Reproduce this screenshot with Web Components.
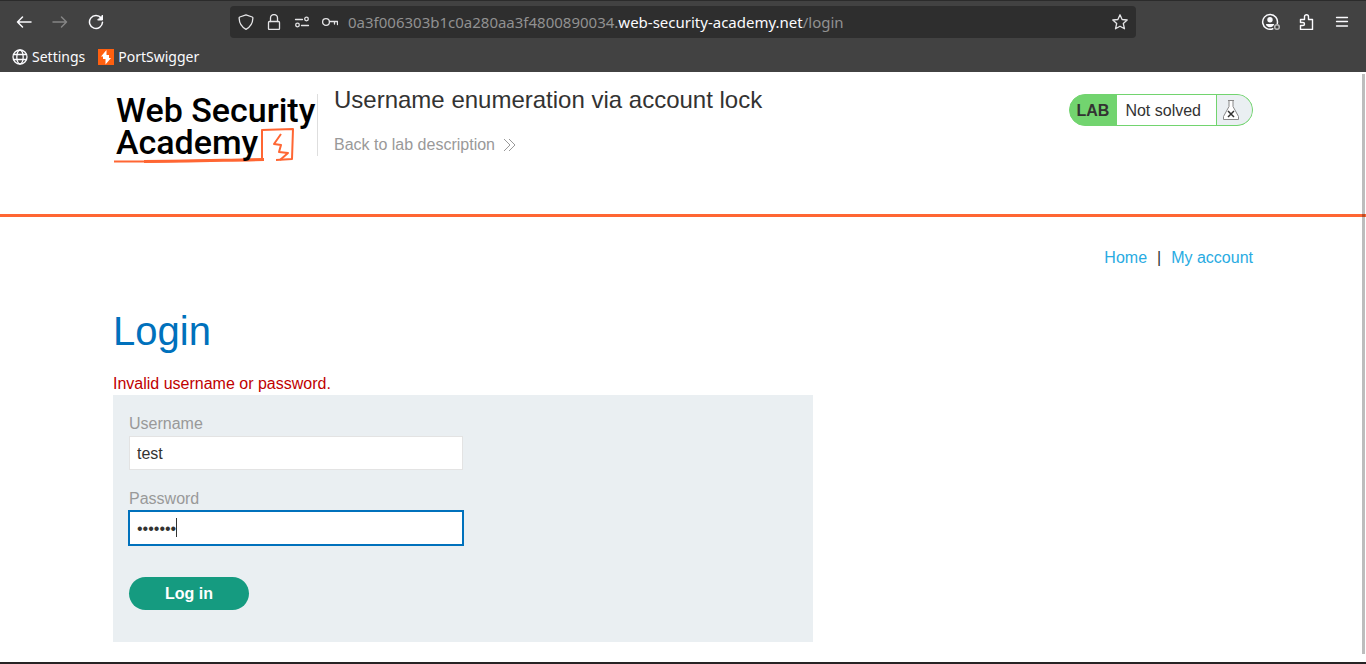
<!DOCTYPE html>
<html lang="en">
<head>
<meta charset="utf-8">
<title>Username enumeration via account lock</title>
<style>
body { margin: 0; background: #fff; color: #333332; font: 16px/22px "Liberation Sans", Arial, sans-serif; }
</style>
</head>
<body>
<app-window>
  <browser-bar slot="bar"></browser-bar>
  <lab-header>
    <span slot="title">Username enumeration via account lock</span>
    <lab-status slot="status">Not solved</lab-status>
  </lab-header>
  <account-nav></account-nav>
  <login-form>Invalid username or password.</login-form>
</app-window>

<script>
const define = (name, markup) => {
  const template = document.createElement('template');
  template.innerHTML = markup;
  customElements.define(name, class extends HTMLElement {
    constructor() {
      super();
      this.attachShadow({ mode: 'open' }).append(template.content.cloneNode(true));
    }
  });
};

define('app-window', `
<style>
  :host { display: flex; flex-direction: column; min-height: 100vh; box-sizing: border-box; border-bottom: 2px solid #262324; position: relative; }
  main { flex: 1; }
  .thumb { position: absolute; top: 74px; right: 1px; bottom: 8px; width: 3px; background: rgba(0,0,0,.26); }
</style>
<slot name="bar"></slot>
<main><slot></slot></main>
<div class="thumb"></div>`);

define('browser-bar', `
<style>
  :host { display: block; background: #424242; border-top: 1px solid #2b2b2b; color: #fbfbfe; font: 14px/20px "Noto Sans", sans-serif; }
  svg { display: block; width: 16px; height: 16px; fill: none; stroke: currentColor; stroke-width: 1.3; stroke-linecap: round; stroke-linejoin: round; }
  .tools { display: flex; align-items: center; padding: 5px 0; }
  .side { flex: 0 0 230px; box-sizing: border-box; display: flex; gap: 20px; padding: 0 16px; }
  .right { justify-content: flex-end; }
  button { all: unset; display: block; }
  button:disabled { color: #858585; }
  .url { flex: 1; min-width: 0; height: 32px; box-sizing: border-box; padding: 0 8px; display: flex; align-items: center; gap: 12px; background: #2e2e2e; border-radius: 4px; }
  .url svg { color: #e4e4e6; }
  .address { flex: 1; margin-left: -2px; font-size: 15px; color: #919191; white-space: nowrap; overflow: hidden; }
  b { font-weight: 400; color: #fbfbfe; }
  .bookmarks { display: flex; gap: 13px; padding: 4px 12px 5px; }
  a { display: flex; align-items: center; gap: 4px; color: inherit; text-decoration: none; }
</style>
<div class="tools">
  <div class="side">
    <button aria-label="Back"><svg viewBox="0 0 16 16"><path d="M15 8H1.500M6.500 3l-5 5 5 5" stroke-width="1.5"/></svg></button>
    <button aria-label="Forward" disabled><svg viewBox="0 0 16 16"><path d="M1 8h13.500M9.500 3l5 5-5 5" stroke-width="1.5"/></svg></button>
    <button aria-label="Reload"><svg viewBox="0 0 16 16"><path d="M13.200 4.100A6.500 6.500 0 1 0 14.500 8.300" stroke-width="1.5"/><path d="M14.500 1.500v4.500H10z" fill="currentColor" stroke-width="1"/></svg></button>
  </div>
  <div class="url">
    <svg viewBox="0 0 16 16"><path d="M8 .8 14.200 3c.5.200.7.500.7 1C14.700 9 12.500 13 8 15.300 3.500 13 1.300 9 1.100 4c0-.5.200-.8.700-1z"/></svg>
    <svg viewBox="0 0 16 16"><rect x="2.500" y="7.500" width="11" height="8" rx="1"/><path d="M4.500 7.500V4a3.500 3.500 0 0 1 7 0v3.500"/></svg>
    <svg viewBox="0 0 16 16"><path d="M1.500 5.500h7M7.500 11.500h7"/><circle cx="12.500" cy="5" r="1.800"/><circle cx="3.500" cy="11" r="1.800"/></svg>
    <svg viewBox="0 0 16 16"><circle cx="4" cy="8" r="3.400"/><path d="M7.500 7.500h8v3M12.500 7.500v2.500"/></svg>
    <div class="address" role="textbox" aria-label="Address" tabindex="0">0a3f006303b1c0a280aa3f4800890034.<b>web-security-academy.net</b>/login</div>
    <button aria-label="Bookmark this page"><svg viewBox="0 0 16 16"><path d="m8 .8 2.100 4.700 5.100.5-3.900 3.500 1.200 5.300L8 12.200l-4.500 2.600 1.200-5.300L.8 6l5.100-.5z"/></svg></button>
  </div>
  <div class="side right">
    <button aria-label="Account"><svg viewBox="0 0 16 16" overflow="visible"><path d="M10.800 14.800A7.400 7.400 0 1 1 15.300 9.500" stroke-width="1.500"/><circle cx="8" cy="5.700" r="2.700" fill="currentColor" stroke="none"/><path d="M3.800 10h8.400c-.5 2-2 3.200-4.200 3.200S4.300 12 3.800 10z" fill="currentColor" stroke="none"/><circle cx="15" cy="13" r="2.300" stroke="#b8b8b8" stroke-width="1.500"/></svg></button>
    <button aria-label="Extensions"><svg viewBox="0 0 16 16"><path d="M2.500 5.500h4V2.700a2 2 0 0 1 4 0v2.800h4v10h-12v-4H5a1.500 1.500 0 0 0 0-3H2.500z" stroke-width="1.400"/></svg></button>
    <button aria-label="Menu"><svg viewBox="0 0 16 16"><path d="M2.500 3.500h11M2.500 7.500h11M2.500 12h11"/></svg></button>
  </div>
</div>
<nav class="bookmarks" aria-label="Bookmarks">
  <a href="#settings"><svg viewBox="0 0 16 16"><circle cx="8" cy="8" r="7"/><ellipse cx="8" cy="8" rx="3.200" ry="7"/><path d="M1.500 5.500h13M1.500 10.500h13"/></svg>Settings</a>
  <a href="#portswigger"><svg viewBox="0 0 16 16"><path fill="#ff6010" stroke="none" d="M0 0h16v16H0z"/><path fill="#fff" stroke="none" d="M8.500 1v5H11v3h2l-5.500 6.500V10H5V7.500H3z"/></svg>PortSwigger</a>
</nav>`);

define('academy-logo', `
<style>
  :host { display: block; width: 204px; height: 76px; }
  a { display: block; position: relative; padding-left: 3px; color: #000; font: 500 34px/32px Roboto, sans-serif; text-decoration: none; white-space: nowrap; }
  svg { position: absolute; left: 0; top: 0; width: 204px; height: 76px; fill: none; stroke: #ff6633; stroke-width: 2; stroke-linejoin: round; }
  span { position: relative; }
</style>
<a href="#academy">
  <svg viewBox="0 0 204 76" aria-hidden="true">
    <path stroke-width="3" d="M31 67.500c40 0 68-1 120-2"/>
    <path d="M1 67.500h40l108-2V36l31-1-1 30-16 1"/>
    <path d="m168 40-7 10 7 1-2 7 9 1-8 7"/>
  </svg>
  <span>Web Security<br>Academy</span>
</a>`);

define('lab-header', `
<style>
  :host { display: block; padding: 0 16px; border-bottom: 3px solid #ff6633; }
  .inner { max-width: 1140px; height: 142px; box-sizing: border-box; margin: 0 auto; padding-top: 22px; display: flex; align-items: flex-start; }
  .about { flex: 1; min-height: 62px; box-sizing: border-box; padding-left: 16px; border-left: 1px solid #dedede; }
  h2 { margin: -10px 0 18px; font-size: 24px; line-height: 32px; font-weight: 400; }
  a { display: flex; width: max-content; align-items: center; gap: 8px; color: #999; text-decoration: none; }
  svg { width: 14px; height: 14px; fill: none; stroke: #999; }
</style>
<div class="inner">
  <academy-logo></academy-logo>
  <div class="about">
    <h2><slot name="title"></slot></h2>
    <a href="#description">Back to lab description<svg viewBox="0 0 14 14"><path d="m1 1 6 6-6 6M6 1l6 6-6 6"/></svg></a>
  </div>
  <slot name="status"></slot>
</div>`);

define('lab-status', `
<style>
  :host { display: flex; box-sizing: border-box; height: 32px; border: 1px solid #72d46f; border-radius: 16px; overflow: hidden; line-height: 32px; background: #72d46f; }
  strong { padding: 0 8px 0 7px; }
  .state { padding: 0 15px 0 8px; background: #fff; }
  .flask { width: 35px; box-sizing: border-box; padding: 5px 0 0 5px; margin-left: 1px; background: #eaeff2; }
  svg { display: block; width: 18px; height: 20px; }
</style>
<strong>LAB</strong><span class="state"><slot></slot></span>
<span class="flask"><svg viewBox="0 0 18 20"><path fill="#fff" stroke="#888" d="M6 .5h6M7 .5v6l-5.500 10v3h15v-3L11 6.500v-6"/><path stroke="#333332" stroke-width="1.500" d="m6 11 6 6m0-6-6 6"/></svg></span>`);

define('account-nav', `
<style>
  :host { display: block; padding: 30px 16px 0; }
  nav { display: flex; justify-content: flex-end; gap: 10px; max-width: 1140px; margin: 0 auto; }
  a { color: #29abe2; text-decoration: none; }
</style>
<nav><a href="#home">Home</a><span>|</span><a href="#account">My account</a></nav>`);

customElements.define('text-field', class extends HTMLElement {
  constructor() {
    super();
    this.attachShadow({ mode: 'open' }).innerHTML = `
<style>
  :host { display: block; }
  label { display: block; margin-bottom: 1px; color: #999; }
  .box { position: relative; max-width: 334px; }
  input { display: block; width: 100%; height: 34px; box-sizing: border-box; padding: 1px 7px 0; border: 1px solid #e3e3e3; border-radius: 0; background: #fff; font: inherit; color: inherit; outline: 0; }
  .caret { display: none; position: absolute; left: 47px; top: 7px; width: 1px; height: 19px; background: #333332; }
  :host([active]) input { border-color: #0071bc; outline: 1px solid #0071bc; caret-color: transparent; }
  :host([active]) .caret { display: block; }
</style>
<label for="field"></label>
<div class="box"><input id="field"><span class="caret"></span></div>`;
  }
  connectedCallback() {
    const input = this.shadowRoot.querySelector('input');
    this.shadowRoot.querySelector('label').textContent = this.getAttribute('label');
    input.type = this.getAttribute('type');
    input.value = this.getAttribute('value');
  }
});

define('login-form', `
<style>
  :host { display: block; padding: 0 16px 20px; }
  section { max-width: 1140px; margin: 0 auto; }
  h1 { margin: 38px 0 18px; font-size: 40px; line-height: 48px; font-weight: 400; color: #0071bc; }
  p { margin: 0; color: #c00000; }
  form { max-width: 700px; box-sizing: border-box; padding: 18px 16px 32px; background: #eaeff2; display: grid; gap: 18px; }
  button { justify-self: start; margin-top: 14px; width: 120px; height: 33px; padding: 0; border: 0; border-radius: 17px; background: #159b80; color: #fff; font: bold 16px/20px "Liberation Sans", Arial, sans-serif; }
</style>
<section>
  <h1>Login</h1>
  <p role="alert"><slot></slot></p>
  <form>
    <text-field label="Username" type="text" value="test"></text-field>
    <text-field label="Password" type="password" value="invalid" active></text-field>
    <button type="button">Log in</button>
  </form>
</section>`);
</script>
</body>
</html>
